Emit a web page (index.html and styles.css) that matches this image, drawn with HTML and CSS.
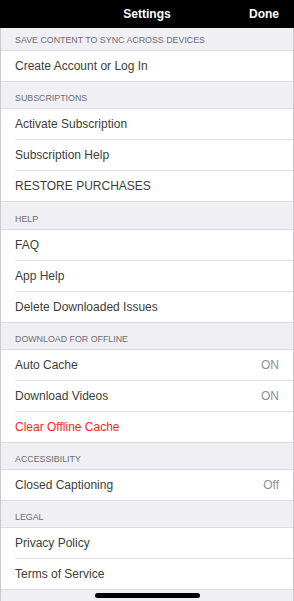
FILE: index.html
```html
<!DOCTYPE html>
<html>
<head>
<meta charset="utf-8">
<link rel="stylesheet" href="styles.css">
</head>
<body>
<div class="screen">
  <header class="nav">
    <span class="nav-side"></span>
    <span class="nav-title">Settings</span>
    <span class="nav-side nav-done">Done</span>
  </header>
  <div class="band band-first">SAVE CONTENT TO SYNC ACROSS DEVICES</div>
  <div class="group">
    <div class="row row-short"><span>Create Account or Log In</span></div>
  </div>
  <div class="band">SUBSCRIPTIONS</div>
  <div class="group">
    <div class="row"><span>Activate Subscription</span></div>
    <div class="row"><span>Subscription Help</span></div>
    <div class="row"><span>RESTORE PURCHASES</span></div>
  </div>
  <div class="band band-tall">HELP</div>
  <div class="group">
    <div class="row"><span>FAQ</span></div>
    <div class="row"><span>App Help</span></div>
    <div class="row"><span>Delete Downloaded Issues</span></div>
  </div>
  <div class="band">DOWNLOAD FOR OFFLINE</div>
  <div class="group">
    <div class="row"><span>Auto Cache</span><span class="value">ON</span></div>
    <div class="row"><span>Download Videos</span><span class="value">ON</span></div>
    <div class="row"><span class="danger">Clear Offline Cache</span></div>
  </div>
  <div class="band">ACCESSIBILITY</div>
  <div class="group">
    <div class="row"><span>Closed Captioning</span><span class="value">Off</span></div>
  </div>
  <div class="band">LEGAL</div>
  <div class="group">
    <div class="row"><span>Privacy Policy</span></div>
    <div class="row"><span>Terms of Service</span></div>
  </div>
  <div class="footer"><div class="home-bar"></div></div>
</div>
</body>
</html>
```

FILE: styles.css
```css
html, body {
  margin: 0;
  padding: 0;
  background: #efeff4;
}
body {
  font-family: "Liberation Sans", Arial, sans-serif;
  width: 294px;
  height: 601px;
  overflow: hidden;
}
.screen {
  box-sizing: border-box;
  width: 294px;
  height: 601px;
  display: flex;
  flex-direction: column;
  background: #efeff4;
  border-left: 1px solid #c9c9ce;
  border-right: 1px solid #c9c9ce;
}
.nav {
  height: 28px;
  background: #000;
  color: #fff;
  display: flex;
  align-items: center;
  justify-content: space-between;
  font-size: 12px;
  font-weight: bold;
  margin: 0 -1px;
  padding: 0 15px 0 15px;
  flex: none;
}
.nav-side {
  width: 40px;
}
.nav-done {
  text-align: right;
}
.nav-title {
  flex: 1;
  text-align: center;
}
.band {
  height: 27px;
  box-sizing: border-box;
  padding: 0 14px 6px 14px;
  display: flex;
  align-items: flex-end;
  font-size: 8.85px;
  color: #6d6d72;
  flex: none;
}
.band-first {
  height: 23px;
}
.band-tall {
  height: 28px;
}
.group {
  background: #fff;
  border-top: 1px solid #dcdce0;
  border-bottom: 1px solid #dcdce0;
  margin-top: -1px;
  flex: none;
}
.row {
  height: 31px;
  box-sizing: border-box;
  margin-left: 14px;
  padding-right: 14px;
  display: flex;
  align-items: center;
  justify-content: space-between;
  font-size: 12px;
  color: #3d3d3d;
  border-bottom: 1px solid #e2e2e6;
}
.row:last-child {
  border-bottom: none;
  height: 30px;
}
.row-short {
  height: 29px;
}
.value {
  color: #8e8e93;
}
.danger {
  color: #fc1d1d;
}
.footer {
  flex: 1;
  display: flex;
  justify-content: center;
  padding-top: 3px;
  border-top: 1px solid #dcdce0;
  margin-top: -1px;
}
.home-bar {
  width: 105px;
  height: 5px;
  border-radius: 3px;
  background: #000;
  margin-left: 1px;
}
```
